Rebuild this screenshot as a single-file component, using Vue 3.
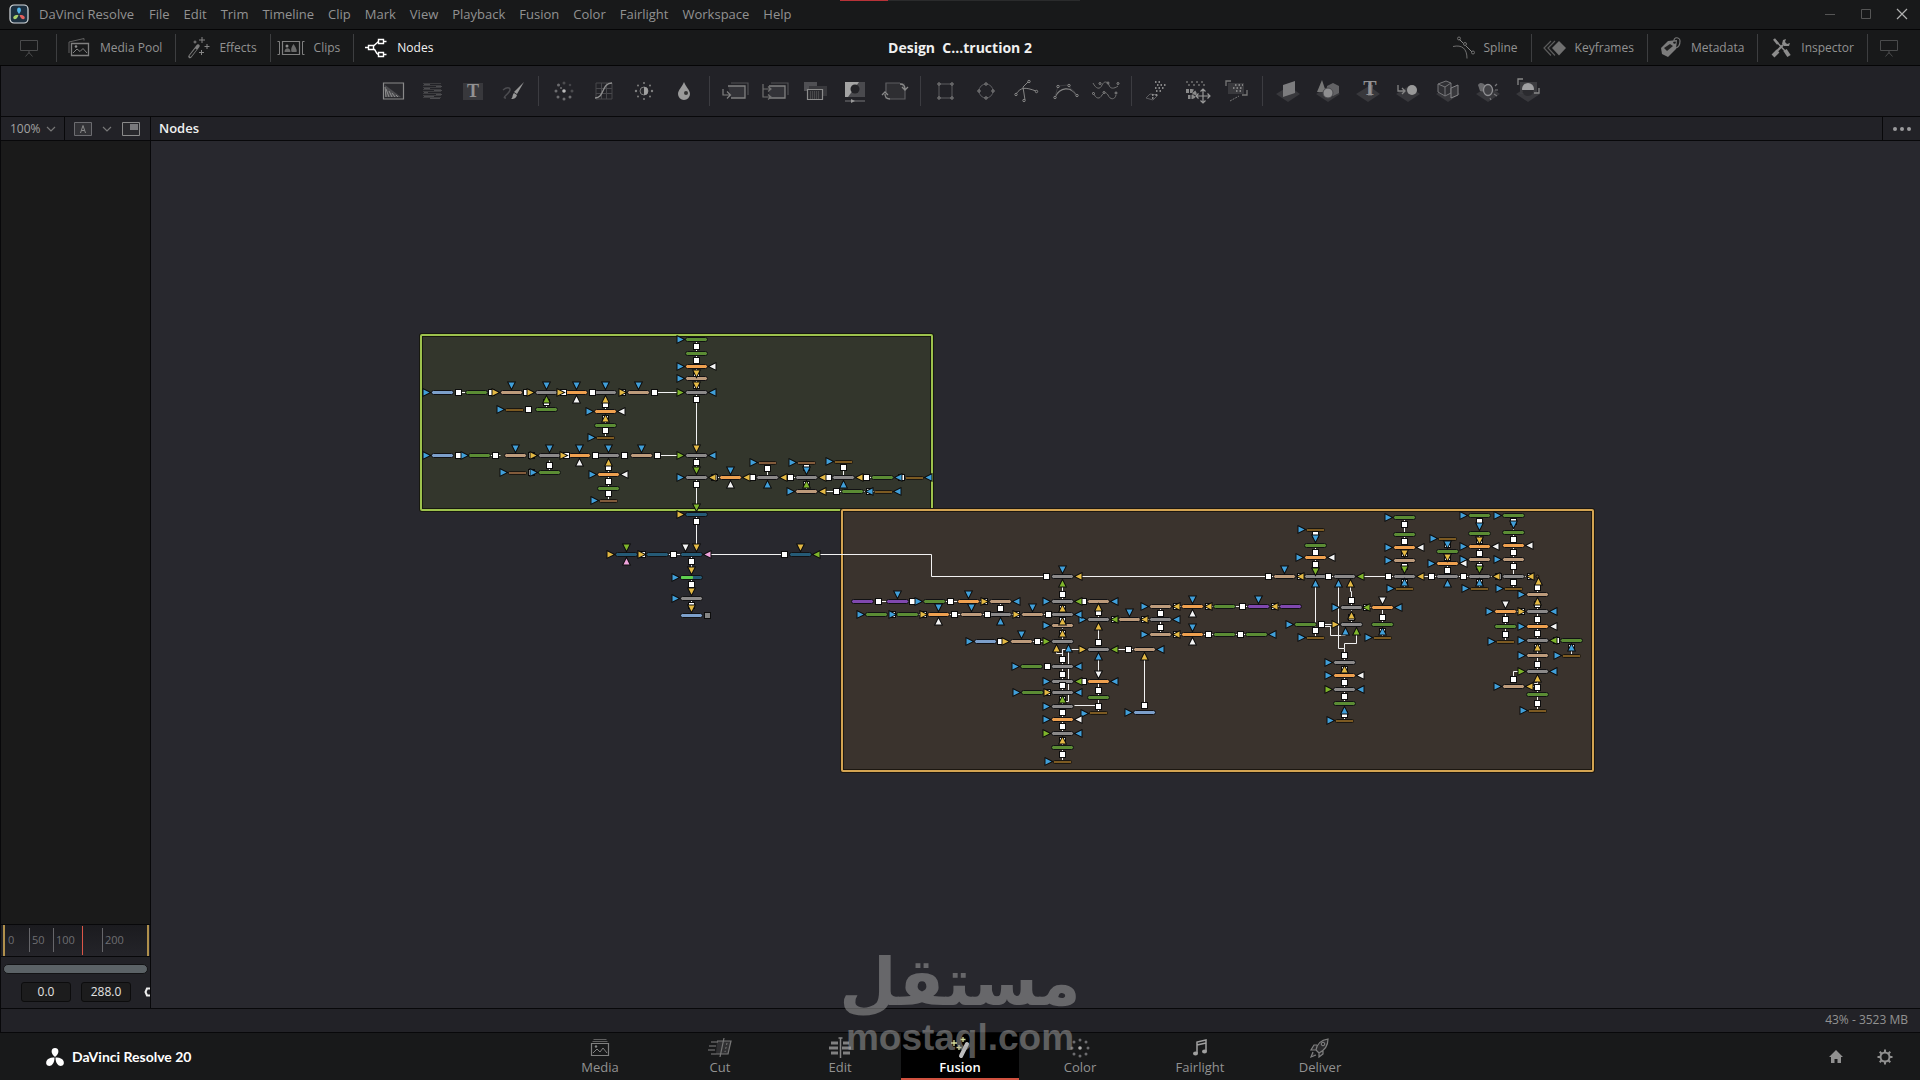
<script setup>
import { ref } from 'vue'

const menus = ['DaVinci Resolve', 'File', 'Edit', 'Trim', 'Timeline', 'Clip', 'Mark', 'View', 'Playback', 'Fusion', 'Color', 'Fairlight', 'Workspace', 'Help']

const leftPanels = [
  { label: 'Media Pool', icon: 'mediaPool' },
  { label: 'Effects', icon: 'effects' },
  { label: 'Clips', icon: 'clips' },
  { label: 'Nodes', icon: 'nodes', active: true }
]
const rightPanels = [
  { label: 'Spline', icon: 'spline' },
  { label: 'Keyframes', icon: 'keyframes' },
  { label: 'Metadata', icon: 'metadata' },
  { label: 'Inspector', icon: 'inspector' }
]

const toolGroups = [
  ['Background', 'FastNoise', 'TextPlus', 'Paint'],
  ['ColorCorrector', 'ColorCurves', 'Brightness', 'Blur'],
  ['Merge', 'ChannelBooleans', 'MatteControl', 'Luma', 'Transform'],
  ['Rectangle', 'Ellipse', 'Polygon', 'BSpline', 'Warp'],
  ['pEmitter', 'pForce', 'pRender'],
  ['ImagePlane', 'Shape', 'Text3D', 'Merge3D', 'Camera', 'Light', 'Renderer']
]

const pages = ['Media', 'Cut', 'Edit', 'Fusion', 'Color', 'Fairlight', 'Deliver']
const page = ref('Fusion')
const zoom = ref('100%')
const rangeIn = ref('0.0')
const rangeOut = ref('288.0')

const panelIcons = {
  monitor: '<g fill="none" stroke="#4a4b4c"><path d="M3.5 4.5h17v10h-17zM12 14v4M8.500 20.500l3.500-4 3.500 4"/></g>',
  mediaPool: '<g fill="none" stroke="#808080"><path d="M3.500 7.500h17v12h-17z" stroke-width="1.300"/><path d="M1 17V6l15-3.500v2" stroke="#606060"/><path d="M5 17l4-4 3 2.500 3-3 4 4.500"/></g><circle cx="8" cy="10.500" r="1.300" fill="#8c8c8c"/>',
  effects: '<path d="M3 20.500L11 10" stroke="#7c7c7c" stroke-width="3.500" stroke-linecap="round"/><path d="M3 20.500L9 13" stroke="#191a1b" stroke-width="1.800"/><g stroke="#858585"><path d="M15 1v6M12 4h6M20 8v5M17.500 10.500h5M14.500 14v5M12 16.500h5M8 4.500v3M6.500 6h3"/></g>',
  clips: '<g fill="none" stroke="#808080"><path d="M.5 5.500h17v13h-17z" stroke-width="1.200"/><path d="M-4.500 5.500h2v13h-2M22.500 5.500h-2v13h2"/></g><circle cx="5" cy="10" r="1.500" fill="#8c8c8c"/><path d="M2.500 16c0-5 6-5 6 0zM9.500 16c-1-3 0-5 2-8 2 3 4 6 3 8z" fill="#6a6a6a"/>',
  nodes: '<g fill="none" stroke="#fff" stroke-width="1.400"><path d="M3.500 9.500h5v4h-5zM13.500 3.500h5v4h-5zM13.500 16.500h5v4h-5z"/><path d="M0 11.500h3M8.500 10l5-4.500M8.500 13c3 1 2 5 5 5.500M18.500 5.500h3M18.500 18.500h3"/></g>',
  spline: '<g fill="none" stroke="#707070"><path d="M1 10.500c9-2 14 2 14 12"/><path d="M7 3l13 13" stroke="#858585"/><circle cx="7" cy="2.500" r="1.500"/><circle cx="13" cy="8" r="1.500" fill="#191a1b"/><circle cx="21" cy="16.500" r="1.500"/></g>',
  keyframes: '<path d="M16 5l7 7-7 7.500-7-7.500z" fill="#707070"/><path d="M12 5l-7 7 7 7.500M8 5l-7 7 7 7.500" fill="none" stroke="#5c5c5c" stroke-width="1.200"/>',
  metadata: '<path d="M2 12l7-7 9-1-1 9-8 8-6-3z" fill="#7c7c7c"/><path d="M5 12l6-4 3 2-6 5z" fill="#222"/><circle cx="15.500" cy="6.500" r="1.300" fill="#191a1b"/><path d="M15 6c-1-6 6-5 6-1 0 4-1 6-4 7" fill="none" stroke="#777" stroke-width="1.200"/>',
  inspector: '<path d="M6 4l11 12" stroke="#8c8c8c" stroke-width="1.500"/><path d="M16 14l4 6" stroke="#8c8c8c" stroke-width="4"/><path d="M14 9l-7 7" stroke="#8c8c8c" stroke-width="2"/><path d="M4 20l5-5" stroke="#8c8c8c" stroke-width="4"/><path d="M15 10l-2-2 1-4 3-1-1 3 2 2 3-1-1 3z" fill="#8c8c8c"/><path d="M5 3l4 5" stroke="#8c8c8c" stroke-width="2.500"/>'
}

const floor = '<path d="M2 17l13-8 11 8-12 8z" fill="#38383c"/>'
const toolIcons = {
  Background: '<path d="M4.500 6h20v16h-20z" fill="#29292d" stroke="#8a8a8a" stroke-width="1.200"/><path d="M6 20V8l16 12z" fill="#4c4c4f"/><path d="M7 20l-1-10M10 20l-3-8M13 20l-3-6M16 20l-3-4M19 20l-2-2" stroke="#8f8f8f"/>',
  FastNoise: '<g stroke-dasharray="1 1"><path d="M4.500 6.500h18M4.500 8.500h18M4.500 10.500h18M4.500 12.500h18M4.500 14.500h18M4.500 16.500h18M4.500 18.500h18M4.500 20.500h18" stroke="#58585b"/><path d="M5.500 7.500h5M5.500 11.500h6M5.500 15.500h4M5.500 19.500h9M17.500 9.500h5M15.500 13.500h7M17.500 17.500h5M11.500 21.500h9" stroke="#77777a"/></g>',
  TextPlus: '<path d="M4 6h20v17H4z" fill="#38383c"/><text x="14" y="20" text-anchor="middle" font-family="Liberation Serif, serif" font-weight="700" font-size="18" fill="#929292">T</text>',
  Paint: '<path d="M25 5l-7 12-3-2z" fill="#989898"/><path d="M15 16l3 2c-1 4-4 4-6 4 2-1 1-4 3-6z" fill="#989898"/><path d="M4 13c5-4 9-2 6 2s-7 6-3 6" fill="none" stroke="#4c4c50" stroke-width="1.500"/>',
  ColorCorrector: '<g fill="#6c6c6f"><circle cx="14" cy="14" r="1.800" fill="#bbb"/><circle cx="14" cy="6" r="1.500" fill="#4c4c4f"/><circle cx="20" cy="8" r="1.300" fill="#444448"/><circle cx="22" cy="14" r="1.500" fill="#4c4c4f"/><circle cx="20" cy="20" r="1.500"/><circle cx="14" cy="22" r="1.500"/><circle cx="8" cy="20" r="1.500"/><circle cx="6" cy="14" r="1.500"/><circle cx="8.500" cy="8" r="1.500"/><circle cx="11" cy="11" r="1"/></g>',
  ColorCurves: '<path d="M6 6h16v16H6zM6 11.500h16M6 16.500h16M11.500 6v16M16.500 6v16" fill="none" stroke="#47474b"/><path d="M5 21c10 0 6-15 17-15" fill="none" stroke="#909090" stroke-width="1.300"/>',
  Brightness: '<circle cx="14" cy="14" r="4" fill="#2a2a2e" stroke="#7c7c7c"/><path d="M14 10a4 4 0 0 1 0 8z" fill="#a0a0a0"/><g fill="#808080"><circle cx="14" cy="6" r="1"/><circle cx="14" cy="22" r="1"/><circle cx="6" cy="14" r="1.200"/><circle cx="22" cy="14" r="1.200"/><circle cx="8" cy="8.500" r="1"/><circle cx="20" cy="8.500" r="1"/><circle cx="8" cy="19.500" r="1"/><circle cx="20" cy="19.500" r="1"/></g>',
  Blur: '<path d="M14 5c2 5 6 8 6 12a6 6 0 0 1-12 0c0-4 4-7 6-12z" fill="#9a9a9a"/><circle cx="16" cy="16" r="2" fill="#333"/>',
  Merge: '<path d="M10 6h17v12" fill="none" stroke="#505054" stroke-width="1.200"/><path d="M7 9h17v12H10" fill="#333338"/><path d="M7 9h17v12H10" fill="none" stroke="#808080" stroke-width="1.300"/><path d="M2 12v6h7M6 14.500l3.500 3.500L6 21.500" fill="none" stroke="#808080" stroke-width="1.200"/>',
  ChannelBooleans: '<path d="M10 6h17v12" fill="none" stroke="#505054" stroke-width="1.200"/><path d="M8 9h16v12H8" fill="#333338" stroke="#808080" stroke-width="1.300"/><path d="M2 7v13h8M2 12h8M7 9.500l3 2.500-3 2.500M7 17.500l3 2.500-3 2.500" fill="none" stroke="#707070" stroke-width="1.200"/>',
  MatteControl: '<path d="M3 5h13v9H3z" fill="#505054"/><path d="M8 9h18v10H8z" fill="#39393d"/><path d="M6.500 12.500h15v10h-15z" fill="#2b2b2f" stroke="#8c8c8c" stroke-width="1.200"/><path d="M9 15h10M9 17h10M9 19h10M9 21h10" stroke="#666" stroke-dasharray="1 1"/>',
  Luma: '<path d="M4 5h20v15H4z" fill="#4a4a4e"/><path d="M4 5h14L7 20H4z" fill="#a4a4a4"/><circle cx="14" cy="12" r="4.500" fill="#222226"/><path d="M4 24h20" stroke="#77777a"/><path d="M10 22l4 2-4 2z" fill="#999"/>',
  Transform: '<path d="M4 6h20v16H4z" fill="#2e2e32"/><path d="M5 15V6h14M24 13v9H9" fill="none" stroke="#5c5c60" stroke-width="1.200"/><path d="M19 7c4 0 5 2 5 5M21 10l3 3 3-3M9 22c-4 0-5-2-5-5M1 18l3-3 3 3" fill="none" stroke="#8a8a8a" stroke-width="1.300"/>',
  Rectangle: '<path d="M7 7h13v14H7z" fill="none" stroke="#5c5c60"/><g fill="#222226" stroke="#8a8a8a"><circle cx="7" cy="7" r="1.200"/><circle cx="20" cy="7" r="1.200"/><circle cx="7" cy="21" r="1.200"/><circle cx="20" cy="21" r="1.200"/></g>',
  Ellipse: '<circle cx="14" cy="14" r="7" fill="none" stroke="#5c5c60"/><g fill="#222226" stroke="#8a8a8a"><circle cx="14" cy="7" r="1.200"/><circle cx="21" cy="14" r="1.200"/><circle cx="14" cy="21" r="1.200"/><circle cx="7" cy="14" r="1.200"/></g>',
  Polygon: '<path d="M4 17c5-7 9-7 20-3M17 4l-6 6 2 13" fill="none" stroke="#858585"/><g fill="#222226" stroke="#8a8a8a"><circle cx="17" cy="4.500" r="1.200"/><circle cx="4" cy="17.500" r="1.200"/><circle cx="24.500" cy="14.500" r="1.200"/><circle cx="12" cy="23.500" r="1.200"/></g>',
  BSpline: '<path d="M3 20c5-10 16-11 21-2" fill="none" stroke="#858585" stroke-width="1.200"/><path d="M3 20L6 9l10-1 8 10" fill="none" stroke="#3c3c40"/><g fill="#222226" stroke="#8a8a8a"><circle cx="3" cy="20.500" r="1.200"/><circle cx="6" cy="9.500" r="1.200"/><circle cx="17" cy="8.500" r="1.200"/><circle cx="25" cy="18.500" r="1.200"/></g>',
  Warp: '<path d="M1 6c3 6 7 7 9 2 2-4 5-4 7 0 1 4 5 4 9 1M1 15c3 8 7 7 9 3 2-3 4-3 6 0 2 5 7 5 8 0" fill="none" stroke="#707070"/><g fill="#222226" stroke="#8a8a8a"><circle cx="8" cy="6.500" r="1"/><circle cx="16" cy="6" r="1"/><circle cx="26" cy="6.500" r="1"/><circle cx="1.500" cy="16.500" r="1"/><circle cx="12" cy="15.500" r="1"/><circle cx="24" cy="16" r="1"/></g>',
  pEmitter: '<path d="M3 21l4-4 8 1-5 5z" fill="none" stroke="#5c5c60"/><path d="M12 5h6M14 8h10M12 11h9M13 14h6M9 18h5M9 21h3" stroke="#a8a8a8" stroke-width="1.300" stroke-dasharray="1.500 2"/>',
  pForce: '<path d="M3 5h20M5 8h17" stroke="#707070" stroke-width="1.500" stroke-dasharray="2 3"/><path d="M3 14h5c4-1 5 5 1 6H5" fill="none" stroke="#8a8a8a" stroke-width="4" stroke-dasharray="3 1"/><path d="M20 12v14M13 19h14M17.500 14.500L20 12l2.500 2.500M17.500 23.500L20 26l2.500-2.500M15.500 16.500L13 19l2.500 2.500M24.500 16.500L27 19l-2.500 2.500" fill="none" stroke="#999" stroke-width="1.200"/>',
  pRender: '<path d="M5 6h16v11H5z" fill="#39393d"/><path d="M3 9V4h5M24 13v5h-5" fill="none" stroke="#777" stroke-width="1.300"/><path d="M12 8h8M10 11h9M13 14h6" stroke="#999" stroke-width="1.300" stroke-dasharray="1.500 2"/><path d="M7 24l9-5" stroke="#777" stroke-dasharray="2 1"/>',
  ImagePlane: floor + '<path d="M9 8l12-4v12L9 20z" fill="#7c7c7e"/>',
  Shape: floor + '<path d="M8 3l4 12H3z" fill="#777"/><path d="M13 9l6-3 6 3v7l-6 3-6-3z" fill="#626265"/><circle cx="14" cy="16" r="5" fill="#8e8e90" stroke="#4a4a4e"/>',
  Text3D: floor + '<path d="M14 8h5l-1 11h-4z" fill="#58585c"/><text x="16" y="18" text-anchor="middle" font-family="Liberation Serif, serif" font-weight="700" font-size="20" fill="#919193">T</text>',
  Merge3D: floor + '<circle cx="18" cy="13" r="5" fill="#999"/><path d="M4 8v6h7M8 11l3 3-3 3" fill="none" stroke="#858585" stroke-width="1.300"/>',
  Camera: floor + '<path d="M4 7l8-3 5 2v10l-6 3-7-4zM4 7l7 3v9M11 10l6-4" fill="#303034" stroke="#77777a"/><path d="M17 11l7-3v10l-7 3z" fill="#38383c" stroke="#858588"/>',
  Light: floor + '<path d="M4 8c2-3 5-2 7 0v7l-5-1z" fill="#69696c"/><ellipse cx="14" cy="13" rx="4.500" ry="5.500" fill="#414145" stroke="#909093" stroke-width="1.300"/><path d="M21 9l2-2M21 13h3M20 17l3 2M16 21l1 2" stroke="#77777a" stroke-width="1.200"/>',
  Renderer: floor + '<path d="M6 5h17v12H6z" fill="#3c3c40"/><circle cx="14" cy="12" r="6" fill="#a0a0a2"/><path d="M8 13a6 6 0 0 0 12 0z" fill="#2b2b2f"/><path d="M4 8V2h5M20 16h5v-5" fill="none" stroke="#888" stroke-width="1.300"/>'
}

const pageIcons = {
  Media: '<g fill="none" stroke="#808080"><path d="M3.500 7.500h17v12h-17z" stroke-width="1.200"/><path d="M4.500 5.500h15M5.500 3.500h13" stroke="#606060"/><path d="M5 17l4-4 3 3 3-4 4 5"/></g><circle cx="8" cy="10.500" r="1.200" fill="#858585"/>',
  Cut: '<path d="M9 5h14l-3 13H8M16 2l-4 19" fill="#303032" stroke="#777" stroke-width="1.200"/><path d="M3 6h7M1 10h7M0 14h7M3 18h5" stroke="#808080" stroke-width="1.200"/><path d="M19 7l-2 9" stroke="#777" stroke-dasharray="2 2"/>',
  Edit: '<path d="M3 7h7M15 7h6M1 12h9M14 12h9M3 17h7M15 17h7" stroke="#808080" stroke-width="3"/><path d="M12.500 2v20M10.500 2h4" stroke="#858585" stroke-width="1.500"/>',
  Fusion: '<path d="M13 20l6-12" stroke="#bdbdbf" stroke-width="4" stroke-linecap="round"/><path d="M6 4v6M3 7h6M15 1v5M12.500 3.500h5M11 9v5M8.500 11.500h5" stroke="#dbe09a" stroke-width="1.300"/>',
  Color: '<g fill="#6c6c6f"><circle cx="12" cy="12" r="1.800" fill="#aaa"/><circle cx="12" cy="4" r="1.500"/><circle cx="18" cy="6" r="1.500"/><circle cx="20" cy="12" r="1.500"/><circle cx="18" cy="18" r="1.500"/><circle cx="12" cy="20" r="1.500"/><circle cx="6" cy="18" r="1.500"/><circle cx="4" cy="12" r="1.500"/><circle cx="6" cy="6" r="1.500"/></g>',
  Fairlight: '<path d="M9 17V6l9-2v11M9 9l9-2" fill="none" stroke="#a0a0a0" stroke-width="1.500"/><ellipse cx="7.500" cy="17.500" rx="2.500" ry="2" fill="#a0a0a0"/><ellipse cx="16.500" cy="15.500" rx="2.500" ry="2" fill="#a0a0a0"/>',
  Deliver: '<path d="M8 14c1-6 5-10 12-11 0 6-3 11-9 14zM9 9H6l-3 5 5 0M15 14v4l-4 3v-4M5 16l-2 5 5-2" fill="#2a2a2c" stroke="#808080" stroke-width="1.200"/><circle cx="15" cy="8" r="1.800" fill="none" stroke="#858585"/>'
}

/* ---- node graph, in canvas coordinates ---- */
const pairs = (list) => {
  const out = []
  for (let i = 0; i < list.length; i += 2) out.push([list[i], list[i + 1]])
  return out
}

const tiles = {
  '#8b8989': [546,392, 605,392, 696,392, 549,455, 608,455, 696,455, 696,477, 767,477, 806,477, 843,477, 691,598, 1062,576, 1062,601, 1062,614, 1000,614, 1062,641, 1098,649, 1098,619, 1160,619, 1062,666, 1062,681, 1062,692, 1062,706, 1062,733, 1315,576, 1344,576, 1351,607, 1351,624, 1344,662, 1344,689, 1404,576, 1447,576, 1479,576, 1513,576, 1537,611, 1537,640, 1537,671],
  '#5b8c34': [476,392, 546,409, 605,425, 479,455, 549,472, 608,488, 696,339, 696,353, 882,477, 852,491, 934,601, 876,614, 907,614, 1031,666, 1032,692, 1098,697, 1062,747, 1224,606, 1224,634, 1256,634, 1315,545, 1305,624, 1382,624, 1344,703, 1404,517, 1404,534, 1447,551, 1479,515, 1479,533, 1513,515, 1513,532, 1505,626, 1571,640, 1537,694],
  '#eea04f': [576,392, 605,411, 579,455, 608,474, 696,366, 730,477, 968,601, 938,614, 1098,681, 1062,719, 1192,606, 1192,634, 1315,557, 1382,607, 1344,675, 1404,547, 1447,563, 1479,546, 1513,545, 1505,611, 1537,626],
  '#bd9b7b': [511,392, 638,392, 515,455, 641,455, 696,378, 806,491, 1000,601, 1098,601, 971,614, 1032,614, 1062,625, 1021,641, 1144,649, 1129,619, 1160,606, 1160,634, 1284,576, 1404,560, 1479,559, 1513,559, 1537,594, 1537,655, 1513,686],
  '#7c9fca': [442,392, 442,455, 691,615, 985,641, 1144,712],
  '#8048ae': [862,601, 897,601, 1258,606, 1290,606],
  '#255a76': [696,514, 626,554, 657,554, 691,554, 800,554, 691,577]
}
const stubs = {
  '#7c5a22': [514,409, 605,437, 843,461, 914,477, 883,491, 1098,712, 1062,761, 1315,529, 1315,637, 1382,637, 1344,720, 1404,588, 1447,538, 1479,588, 1513,588, 1505,641, 1571,655, 1537,710],
  '#825b3b': [517,472, 608,500, 767,462, 806,462]
}
const outputs = [458,392, 491,392, 526,392, 563,392, 592,392, 622,392, 654,392, 528,409, 546,402, 605,404, 605,418, 605,430, 458,455, 495,455, 531,455, 566,455, 595,455, 624,455, 657,455, 531,472, 549,465, 608,467, 608,481, 608,493, 696,346, 696,360, 696,373, 696,385, 696,399, 696,462, 696,484, 696,521, 714,477, 752,477, 767,468, 790,477, 806,467, 828,477, 843,467, 866,477, 901,477, 806,484, 836,491, 869,491, 642,554, 673,554, 784,554, 691,561, 691,584, 691,605, 1046,576, 1062,594, 878,601, 912,601, 950,601, 984,601, 1000,608, 1083,601, 1098,612, 1062,608, 892,614, 923,614, 954,614, 987,614, 1016,614, 1048,614, 1062,620, 1062,633, 1037,641, 1000,641, 1062,659, 1128,649, 1144,705, 1114,619, 1144,619, 1098,642, 1083,681, 1098,690, 1098,706, 1047,666, 1062,674, 1062,685, 1047,692, 1062,699, 1062,712, 1062,726, 1062,740, 1062,754, 1176,606, 1208,606, 1242,606, 1274,606, 1160,613, 1160,627, 1176,634, 1208,634, 1240,634, 1315,534, 1315,552, 1315,564, 1268,576, 1300,576, 1328,576, 1388,576, 1315,630, 1344,655, 1351,600, 1366,607, 1351,617, 1321,624, 1382,617, 1382,631, 1344,669, 1344,682, 1344,696, 1344,714, 1404,524, 1404,541, 1404,553, 1404,566, 1431,576, 1404,582, 1447,544, 1447,557, 1447,570, 1463,576, 1479,521, 1479,540, 1479,553, 1479,566, 1479,582, 1498,576, 1513,521, 1513,539, 1513,552, 1513,566, 1513,582, 1530,576, 1537,587, 1537,604, 1521,611, 1505,619, 1505,634, 1537,619, 1537,633, 1556,640, 1571,647, 1537,647, 1537,664, 1513,679, 1537,687, 1537,703]

const BLUE = '#41a0da', YELLOW = '#e4b944', GREEN = '#7fb52b', WHITE = '#f4f4f4', PINK = '#efa3dc'
const inputs = [
  ['right', BLUE, [426,392, 500,409, 589,411, 591,437, 426,455, 464,455, 503,472, 533,472, 592,474, 594,500, 680,339, 680,366, 680,378, 680,477, 753,462, 792,462, 829,461, 790,491, 675,577, 675,598, 918,601, 1046,601, 860,614, 892,614, 1046,625, 969,641, 1128,712, 1082,619, 1084,713, 1015,666, 1046,681, 1016,692, 1046,706, 1046,719, 1048,761, 1144,606, 1144,634, 1301,529, 1299,557, 1335,607, 1289,624, 1301,637, 1368,637, 1328,662, 1328,675, 1330,720, 1388,517, 1388,547, 1388,560, 1390,588, 1433,538, 1431,563, 1463,515, 1463,546, 1463,559, 1465,588, 1497,515, 1497,559, 1499,588, 1521,594, 1489,611, 1491,641, 1521,626, 1521,640, 1557,655, 1521,655, 1497,686, 1523,710]],
  ['right', YELLOW, [495,392, 530,392, 560,392, 622,392, 533,455, 563,455, 680,514, 610,554, 641,554, 984,601, 923,614, 1016,614, 1005,641, 1082,649, 1047,692, 1335,624, 1521,611]],
  ['right', GREEN, [680,392, 680,455, 1046,641, 1046,733, 1328,689, 1521,671]],
  ['left', BLUE, [712,392, 712,455, 898,477, 928,477, 869,491, 897,491, 1016,601, 1114,601, 1078,614, 1160,649, 1176,619, 1114,681, 1078,666, 1078,692, 1078,733, 1272,634, 1398,607, 1360,689, 1553,611, 1553,671]],
  ['left', WHITE, [621,411, 624,474, 712,366, 1078,719, 1331,557, 1360,675, 1420,547, 1463,563, 1495,546, 1529,545, 1553,626]],
  ['left', YELLOW, [712,477, 746,477, 783,477, 822,477, 859,477, 822,491, 1078,576, 1144,619, 1176,606, 1208,606, 1274,606, 1176,634, 1300,576, 1420,576, 1496,576, 1530,576, 1529,686]],
  ['left', GREEN, [816,554, 1078,601, 1114,649, 1114,619, 1078,681, 1360,576, 1366,607, 1553,640]],
  ['left', PINK, [707,554]],
  ['down', BLUE, [511,385, 546,385, 576,385, 605,385, 638,385, 515,448, 549,448, 579,448, 608,448, 641,448, 730,470, 806,470, 1062,569, 897,594, 968,594, 938,607, 971,607, 1032,607, 1021,634, 1129,612, 1192,599, 1258,599, 1192,627, 1284,569, 1315,538, 1447,544, 1479,526, 1513,524]],
  ['down', YELLOW, [696,373, 696,385, 696,448, 696,547, 800,547, 691,570, 691,591, 691,608, 1404,553, 1447,557, 1479,540]],
  ['down', GREEN, [696,470, 696,507, 626,547, 1404,569, 1479,569, 1315,571]],
  ['down', WHITE, [685,547, 1098,674, 1382,600, 1505,604]],
  ['up', WHITE, [576,399, 579,462, 730,484, 938,621, 1192,613, 1192,641]],
  ['up', YELLOW, [605,399, 605,418, 608,462, 1098,607, 1062,608, 1062,621, 1062,633, 1056,648, 1144,656, 1098,626, 1062,740, 1350,583, 1351,615, 1344,669, 1538,581, 1537,601, 1537,647, 1537,678]],
  ['up', GREEN, [546,399, 806,484, 1062,583, 1062,699, 1356,631]],
  ['up', BLUE, [767,484, 843,484, 1000,621, 1068,648, 1098,656, 1315,583, 1338,583, 1345,631, 1382,631, 1344,710, 1404,582, 1447,583, 1479,582, 1571,647]],
  ['up', PINK, [626,561]]
]
const arrows = {
  right: 'M-3 -3L3 0L-3 3Z',
  left: 'M3 -3L-3 0L3 3Z',
  down: 'M-3 -3L3 -3L0 3Z',
  up: 'M-3 3L3 3L0 -3Z'
}
const wires = [
  'M458 392H490', 'M458 455H500', 'M654 392H680', 'M657 455H680', 'M696 339V550', 'M546 399V409', 'M605 396V437', 'M608 460V500', 'M549 460V472',
  'M696 477H790', 'M790 477H914', 'M767 462V477', 'M806 462V491', 'M843 461V477', 'M822 491H883',
  'M642 554H691', 'M707 554H784', 'M816 554H931V576H1046', 'M691 554V615', 'M1078 576H1268', 'M1062 576V641',
  'M878 601H1000', 'M1000 601V614', 'M892 614H1062', 'M1083 601H1098V619', 'M1005 641H1046',
  'M1056 650V653H1062V649H1082', 'M1062 649V761', 'M1068 650V701H1062', 'M1074 705H1098', 'M1114 649H1144', 'M1144 658V705',
  'M1098 626V645', 'M1098 656V674', 'M1098 681V712', 'M1114 619H1160', 'M1160 606V634', 'M1176 606H1290', 'M1176 634H1256',
  'M1315 529V576', 'M1268 576H1344', 'M1315 583V637', 'M1338 583V648H1344V643H1356V634', 'M1344 648V720',
  'M1350 583V591H1351V624', 'M1321 624H1335', 'M1321 626H1330V635H1345', 'M1366 607H1382', 'M1382 607V637',
  'M1360 576H1530', 'M1404 517V588', 'M1447 538V576', 'M1479 515V588', 'M1513 515V588', 'M1537 581V594',
  'M1537 594V671', 'M1521 611H1505V641', 'M1553 640H1571V655', 'M1513 679V671H1521', 'M1529 686H1534V683H1537', 'M1537 678V710'
]
</script>

<template>
  <div class="app">
    <header class="titlebar">
      <svg class="app-logo" width="20" height="20" viewBox="0 0 20 20" aria-hidden="true">
        <rect x="1" y="1" width="18" height="18" rx="4" fill="#1d3040" stroke="#d8dcdf" stroke-width="1.200" />
        <path d="M10 10C7 7 8 3.500 10 3.500S13 7 10 10z" fill="#55b7e8" />
        <path d="M9.500 11c-1 4-4 5-5 3.500S5.500 10.500 9.500 11z" fill="#a9d06c" />
        <path d="M10.500 11c1 4 4 5 5 3.500S14.500 10.500 10.500 11z" fill="#e3605c" />
      </svg>
      <nav class="menus" aria-label="Application menu">
        <button v-for="m in menus" :key="m" type="button">{{ m }}</button>
      </nav>
      <div class="progress"><span></span></div>
      <div class="window-buttons">
        <button type="button" aria-label="Minimize"><svg width="12" height="12" viewBox="0 0 12 12"><path d="M1 6.500h10" stroke="#555" stroke-width="1" /></svg></button>
        <button type="button" aria-label="Maximize"><svg width="12" height="12" viewBox="0 0 12 12"><path d="M1.500 1.500h9v9h-9z" fill="none" stroke="#555" /></svg></button>
        <button type="button" aria-label="Close"><svg width="12" height="12" viewBox="0 0 12 12"><path d="M1 1l10 10M11 1L1 11" stroke="#b0b0b0" stroke-width="1.200" /></svg></button>
      </div>
    </header>

    <div class="panelbar">
      <div class="panels">
        <button type="button" class="panel-end" aria-label="Left display"><svg width="24" height="24" viewBox="0 0 24 24" v-html="panelIcons.monitor"></svg></button>
        <button v-for="p in leftPanels" :key="p.label" type="button" class="panel" :class="{ active: p.active }">
          <svg width="24" height="24" viewBox="0 0 24 24" v-html="panelIcons[p.icon]"></svg>{{ p.label }}
        </button>
      </div>
      <h1>Design&nbsp; C...truction 2</h1>
      <div class="panels right">
        <button v-for="p in rightPanels" :key="p.label" type="button" class="panel">
          <svg width="24" height="24" viewBox="0 0 24 24" v-html="panelIcons[p.icon]"></svg>{{ p.label }}
        </button>
        <button type="button" class="panel-end last" aria-label="Right display"><svg width="24" height="24" viewBox="0 0 24 24" v-html="panelIcons.monitor"></svg></button>
      </div>
    </div>

    <div class="toolbar" role="toolbar">
      <div v-for="(group, i) in toolGroups" :key="i" class="tool-group">
        <button v-for="t in group" :key="t" type="button" :aria-label="t">
          <svg width="28" height="28" viewBox="0 0 28 28" v-html="toolIcons[t]"></svg>
        </button>
      </div>
    </div>

    <main class="workspace">
      <aside class="viewer">
        <div class="viewer-head">
          <label class="zoom">
            <select v-model="zoom" aria-label="Viewer zoom"><option>100%</option><option>50%</option></select>
            <svg width="10" height="6" viewBox="0 0 10 6"><path d="M1 1l4 4 4-4" fill="none" stroke="#777" stroke-width="1.200" /></svg>
          </label>
          <div class="view-modes">
            <button type="button" aria-label="Buffer A">
              <svg width="18" height="14" viewBox="0 0 18 14"><path d="M.5.5h17v13H.500z" fill="#323236" stroke="#6c6c70" /><path d="M6.500 11L9 3.500l2.500 7.500M7.500 8.500h3" fill="none" stroke="#8a8a8a" /></svg>
            </button>
            <button type="button" aria-label="Buffer options"><svg width="10" height="6" viewBox="0 0 10 6"><path d="M1 1l4 4 4-4" fill="none" stroke="#777" stroke-width="1.200" /></svg></button>
            <button type="button" aria-label="Sub view">
              <svg width="18" height="14" viewBox="0 0 18 14"><path d="M.5.5h17v13H.500z" fill="#28282c" stroke="#8a8a8a" /><path d="M8 2h8v6H8z" fill="#7a7a7d" /></svg>
            </button>
          </div>
        </div>
        <div class="viewer-body"></div>
        <div class="ruler">
          <span class="mark bound">0</span>
          <span class="mark">50</span>
          <span class="mark wide">100</span>
          <span class="mark playhead"></span>
          <span class="mark">200</span>
        </div>
        <div class="transport">
          <div class="scroll"></div>
          <div class="range">
            <input v-model="rangeIn" type="text" aria-label="Range start" />
            <input v-model="rangeOut" type="text" aria-label="Range end" />
            <svg width="12" height="10" viewBox="0 0 12 10" aria-hidden="true"><path d="M6 1.500H3l-1.500 3.500L3 8.500h3" fill="none" stroke="#eee" stroke-width="2" /></svg>
          </div>
        </div>
      </aside>

      <section class="flow">
        <div class="flow-head">
          <h2>Nodes</h2>
          <button type="button" aria-label="Options"><i></i><i></i><i></i></button>
        </div>
        <div class="flow-canvas">
          <svg width="100%" height="100%" aria-label="Node graph">
            <g transform="translate(-151 -141)">
              <rect x="421" y="335" width="511" height="175" rx="1" fill="#33362c" stroke="#17180f" stroke-width="4" />
              <rect x="421" y="335" width="511" height="175" rx="1" fill="none" stroke="#9dc24d" stroke-width="2" />
              <rect x="842" y="510" width="751" height="261" rx="1" fill="#3a332d" stroke="#1c1710" stroke-width="4" />
              <rect x="842" y="510" width="751" height="261" rx="1" fill="none" stroke="#d3a452" stroke-width="2" />
            </g>
            <g transform="translate(-150.500 -140.500)">
              <path v-for="w in wires" :key="w" :d="w" fill="none" stroke="#f2f2f2" />
              <template v-for="(list, color) in tiles" :key="color">
                <rect v-for="([x, y], i) in pairs(list)" :key="i" :x="x - 11" :y="y - 2" width="22" height="4" rx="2" :fill="color" stroke="#121214" />
              </template>
              <path d="M681 576h11v2h-11z" fill="#5fce50" stroke="#5fce50" />
              <template v-for="(list, color) in stubs" :key="color">
                <rect v-for="([x, y], i) in pairs(list)" :key="i" :x="x - 9" :y="y - 1" width="18" height="3" rx="1" :fill="color" stroke="#1a1712" />
              </template>
              <rect v-for="([x, y], i) in pairs(outputs)" :key="i" :x="x - 3" :y="y - 3" width="6" height="6" fill="#fff" stroke="#0c0c0c" />
              <rect x="704" y="612" width="6" height="6" fill="#858585" stroke="#0c0c0c" />
              <circle cx="1537" cy="576" r="1.500" fill="#5c4b35" stroke="#15120e" />
              <template v-for="([dir, color, list], k) in inputs" :key="k">
                <path v-for="([x, y], i) in pairs(list)" :key="i" class="port" :d="arrows[dir]" :transform="`translate(${x} ${y})`" :fill="color" />
              </template>
            </g>
          </svg>
        </div>
      </section>
    </main>

    <div class="status">43% - 3523 MB</div>

    <footer class="pagebar">
      <div class="brand">
        <svg width="18" height="18" viewBox="0 0 18 18" aria-hidden="true"><g fill="#fff"><path d="M9 9C4 5 5 0 9 0s5 5 0 9z" /><path d="M8.500 9.500c0 7-4 9.500-7 8-3.500-3 0-9 7-8z" /><path d="M9.500 9.500c0 7 4 9.500 7 8 3.500-3 0-9-7-8z" /></g></svg>
        DaVinci Resolve 20
      </div>
      <nav class="pages" aria-label="Pages">
        <button v-for="p in pages" :key="p" type="button" :class="{ active: p === page }" @click="page = p">
          <svg width="24" height="24" viewBox="0 0 24 24" v-html="pageIcons[p]"></svg>
          <span>{{ p }}</span>
        </button>
      </nav>
      <div class="corner">
        <button type="button" aria-label="Project manager"><svg width="16" height="16" viewBox="0 0 16 16"><path d="M8 1L1 8h2v6h3.500v-4h3v4H13V8h2z" fill="#909090" /></svg></button>
        <button type="button" aria-label="Project settings">
          <svg width="16" height="16" viewBox="0 0 16 16"><circle cx="8" cy="8" r="4.500" fill="none" stroke="#909090" stroke-width="2" /><path d="M8 .5V3M8 13v2.500M.5 8H3M13 8h2.500M2.700 2.700l1.800 1.800M11.500 11.500l1.800 1.800M13.300 2.700l-1.800 1.800M4.500 11.500l-1.800 1.800" stroke="#909090" stroke-width="2" /></svg>
        </button>
      </div>
    </footer>

    <div class="watermark">
      <div class="wm-ar" lang="ar" dir="rtl">مستقل</div>
      <div class="wm-en">mostaql.com</div>
    </div>
  </div>
</template>

<style>
body {
  margin: 0;
  background: #18191a;
}
</style>

<style scoped>
.app {
  position: relative;
  display: flex;
  flex-direction: column;
  min-height: 100vh;
  overflow: hidden;
  background: #18191a;
  color: #929292;
  font-family: "Open Sans", "Noto Sans", sans-serif;
  font-size: 13px;
  line-height: 18px;
}
button {
  margin: 0;
  padding: 0;
  border: 0;
  background: none;
  color: inherit;
  font: inherit;
}
svg {
  display: block;
  flex: none;
  overflow: visible;
}
h1,
h2 {
  margin: 0;
  color: #f0f0f0;
}

.titlebar {
  display: flex;
  align-items: center;
  height: 28px;
  padding: 0 12px 1px 9px;
  border-bottom: 1px solid #050506;
}
.menus {
  display: flex;
  flex: 1;
  gap: 14px;
  padding-left: 10px;
}
.menus button:first-child {
  margin-right: 1px;
}
.progress {
  position: absolute;
  top: 0;
  left: 50%;
  width: 240px;
  height: 1px;
  margin-left: -120px;
  background: #2a2b2c;
}
.progress span {
  display: block;
  width: 48px;
  height: 1px;
  background: #b83238;
}
.window-buttons {
  display: flex;
  gap: 24px;
}

.panelbar {
  display: grid;
  grid-template-columns: 1fr auto 1fr;
  align-items: center;
  height: 35px;
  border-bottom: 1px solid #050506;
}
.panelbar h1 {
  font-size: 14px;
  font-weight: 700;
  line-height: 20px;
}
.panels {
  display: flex;
  font-size: 12px;
}
.panels.right {
  justify-content: flex-end;
}
.panel,
.panel-end {
  display: flex;
  align-items: center;
  gap: 8px;
  height: 28px;
  padding: 0 13px 0 11px;
  border-right: 1px solid #3d3e40;
}
.panel-end {
  padding: 0 15px 0 17px;
}
.panel-end.last {
  padding: 0 19px 0 9px;
  border-right: 0;
}
.panels:first-child .panel:last-child {
  border-right: 0;
}
.panel.active {
  color: #f2f2f2;
}

.toolbar {
  display: flex;
  justify-content: center;
  align-items: center;
  height: 50px;
  border-bottom: 1px solid #08080a;
  border-left: 1px solid #08080a;
  background: #222227;
}
.tool-group {
  display: flex;
}
.tool-group + .tool-group {
  margin-left: 5px;
  padding-left: 5px;
  border-left: 1px solid #3c3c41;
}
.tool-group button {
  display: flex;
  justify-content: center;
  align-items: center;
  width: 40px;
  height: 30px;
}

.workspace {
  display: flex;
  flex: 1;
  border-left: 1px solid #08080a;
}
.viewer {
  display: flex;
  flex: none;
  flex-direction: column;
  width: 149px;
  border-right: 1px solid #08080a;
  background: #222227;
}
.viewer-head,
.flow-head {
  display: flex;
  align-items: center;
  height: 23px;
  border-bottom: 1px solid #08080a;
  background: #222227;
}
.zoom {
  display: flex;
  align-items: center;
  gap: 4px;
  height: 23px;
  padding: 0 8px 0 9px;
  border-right: 1px solid #08080a;
}
.zoom select {
  width: 32px;
  margin: 0;
  padding: 0;
  border: 0;
  appearance: none;
  background: none;
  color: #a2a2a2;
  font: inherit;
  font-size: 12px;
}
.view-modes {
  display: flex;
  flex: 1;
  align-items: center;
  gap: 10px;
  padding-left: 9px;
}
.viewer-body {
  flex: 1;
  background: #1a1a1a;
}
.ruler {
  display: flex;
  height: 31px;
  padding: 0 2px;
  border: 1px solid #08080a;
  border-width: 1px 0;
  background: linear-gradient(#1b1b1f, #242429);
  box-shadow: inset 2px 0 #222227, inset 4px 0 #b0904c, inset -1px 0 #222227, inset -3px 0 #b0904c;
  color: #6e6e72;
  font-size: 11px;
  line-height: 30px;
}
.mark {
  box-sizing: border-box;
  width: 24px;
  padding-left: 3px;
  background: linear-gradient(#66666a, #66666a) no-repeat 0 3px / 1px 24px;
}
.mark.bound {
  width: 26px;
  padding-left: 5px;
  background: none;
}
.mark.wide {
  width: 29px;
}
.mark.playhead {
  width: 20px;
  background: linear-gradient(#dc5648, #dc5648) no-repeat 0 1px / 1px 29px;
}
.transport {
  height: 51px;
}
.scroll {
  height: 8px;
  margin: 7px 2px 0;
  border: 1px solid #131315;
  border-radius: 5px;
  background: #5b6266;
}
.range {
  display: flex;
  align-items: center;
  gap: 10px;
  overflow: hidden;
  padding: 8px 0 0 20px;
}
.range input {
  box-sizing: border-box;
  flex: none;
  width: 50px;
  height: 20px;
  padding: 0 0 1px;
  border: 1px solid #0c0c0d;
  border-radius: 3px;
  background: #1c1c1d;
  color: #e2e2e2;
  font: inherit;
  font-size: 12px;
  text-align: center;
}
.range svg {
  margin-left: 3px;
}

.flow {
  display: flex;
  flex: 1;
  flex-direction: column;
  min-width: 0;
}
.flow-head {
  justify-content: space-between;
  padding-left: 8px;
}
.flow-head h2 {
  padding-bottom: 1px;
  font-size: 13px;
  font-weight: 600;
  line-height: 18px;
}
.flow-head button {
  display: flex;
  justify-content: center;
  align-items: center;
  gap: 3px;
  width: 38px;
  height: 23px;
  border-left: 1px solid #08080a;
}
.flow-head i {
  width: 4px;
  height: 4px;
  border-radius: 2px;
  background: #9a9a9c;
}
.flow-canvas {
  flex: 1;
  overflow: hidden;
  background: #28282e;
}
.port {
  stroke: #0c0c0c;
  stroke-width: 2px;
  paint-order: stroke;
}

.status {
  height: 23px;
  padding: 0 12px;
  border: 1px solid #08080a;
  border-width: 1px 0 1px 1px;
  background: #222227;
  font-size: 12px;
  line-height: 21px;
  text-align: right;
}

.pagebar {
  display: grid;
  grid-template-columns: 1fr auto 1fr;
  align-items: center;
  height: 47px;
}
.brand {
  display: flex;
  align-items: center;
  gap: 8px;
  padding-left: 46px;
  color: #fff;
  font-family: Lato, sans-serif;
  font-size: 14px;
  font-weight: 700;
}
.pages {
  display: flex;
  gap: 2px;
}
.pages button {
  box-sizing: border-box;
  display: flex;
  flex-direction: column;
  align-items: center;
  width: 118px;
  height: 47px;
  padding-top: 3px;
}
.pages .active {
  border-bottom: 2px solid #d0513f;
  background: #000;
  color: #fff;
  font-weight: 600;
}
.pages span {
  margin-top: -2px;
}
.corner {
  display: flex;
  justify-content: flex-end;
  gap: 33px;
  padding-right: 27px;
}

.watermark {
  position: absolute;
  bottom: 22px;
  left: 50%;
  display: flex;
  flex-direction: column;
  align-items: center;
  width: 240px;
  margin-left: -120px;
  color: #a6a6a6;
  opacity: 0.5;
  font-weight: 700;
  pointer-events: none;
}
.wm-ar {
  font-family: "DejaVu Sans", sans-serif;
  font-size: 66px;
  line-height: 70px;
}
.wm-en {
  font-family: "Liberation Sans", sans-serif;
  font-size: 37px;
  line-height: 40px;
}
</style>
